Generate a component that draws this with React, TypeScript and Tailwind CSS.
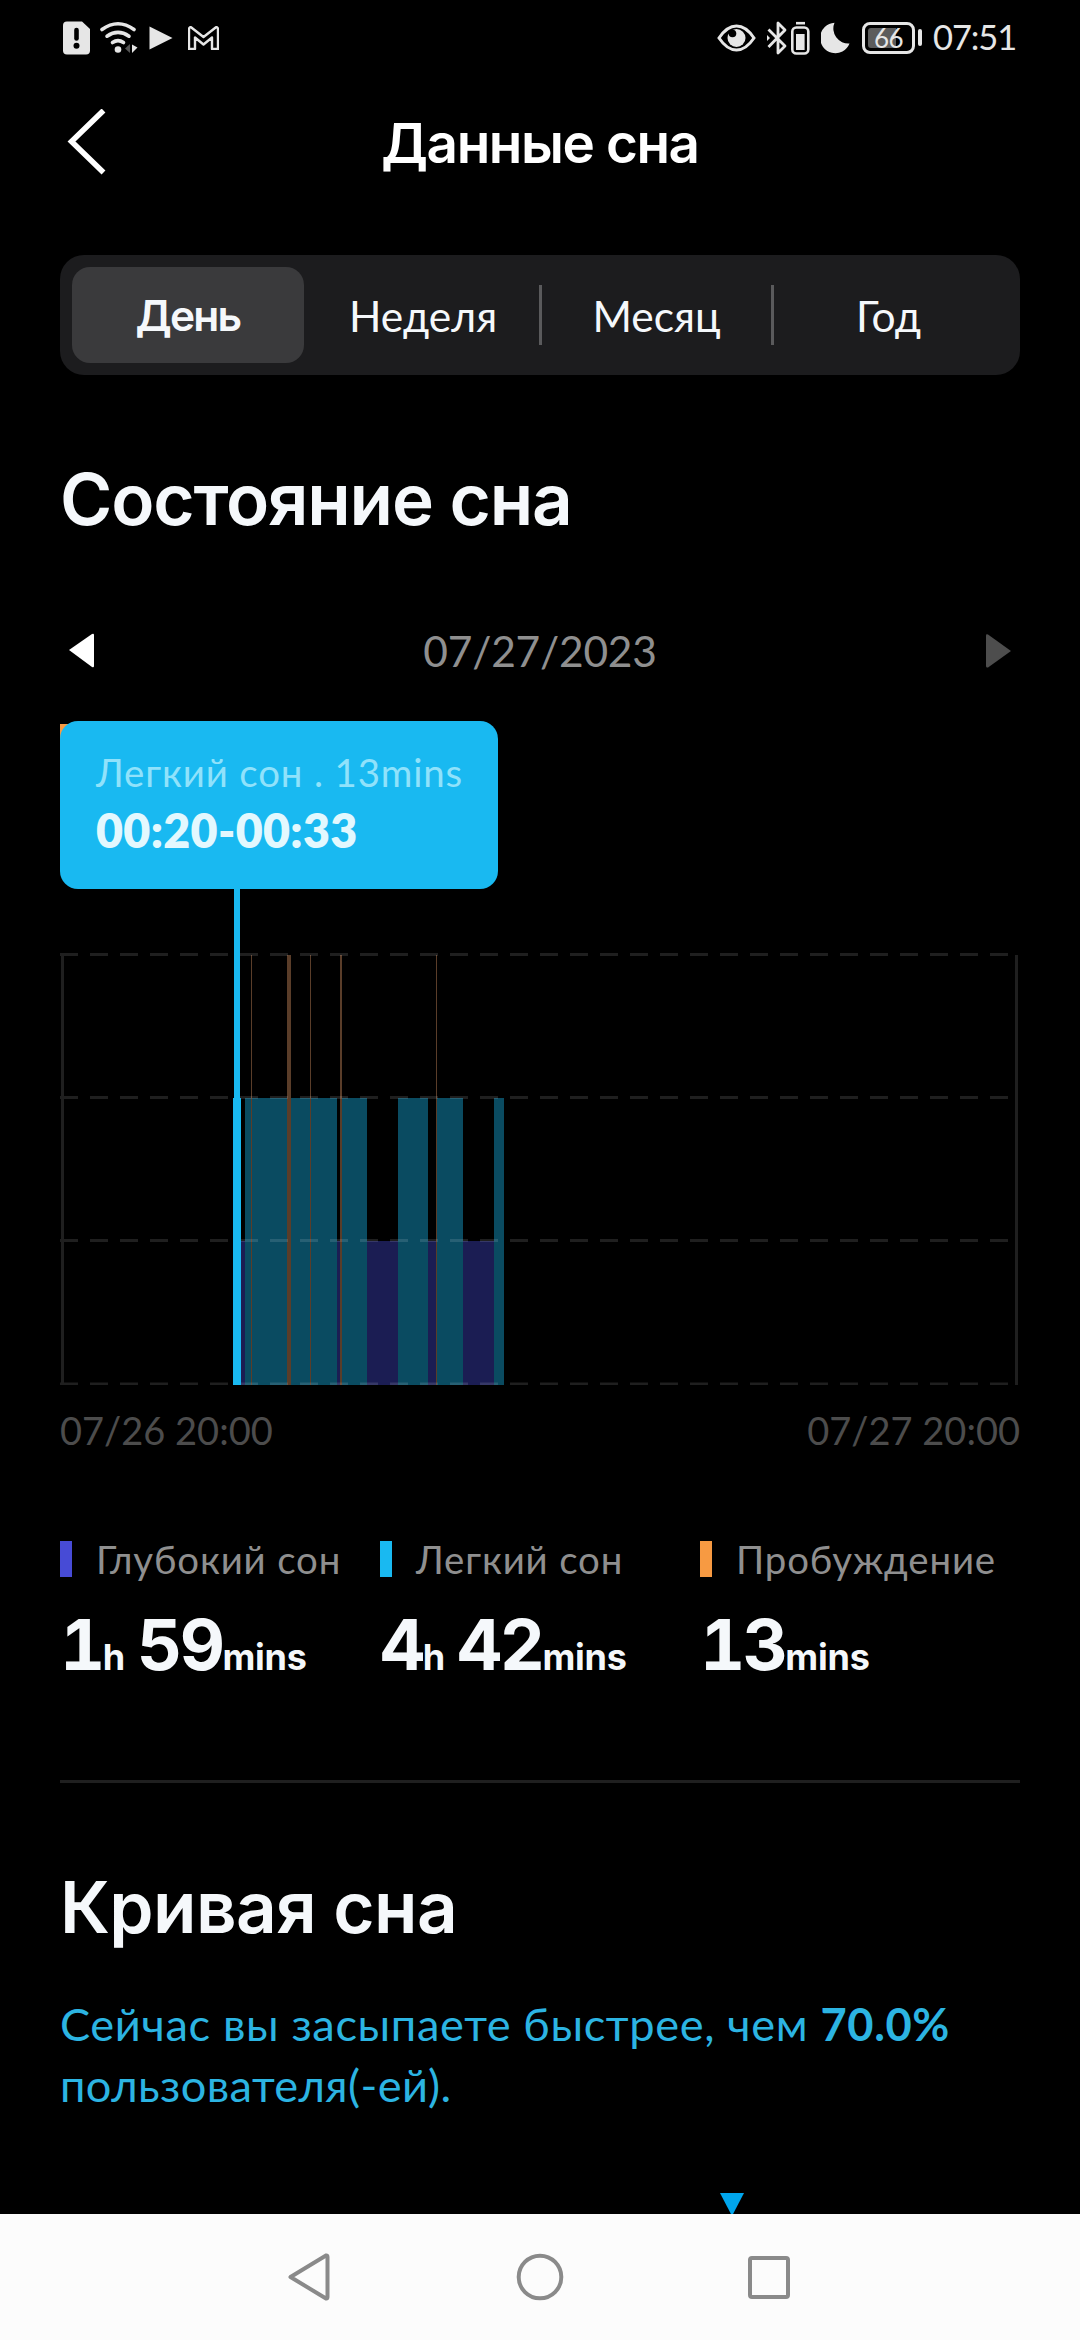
import { useState } from "react";
import clsx from "clsx";

const tabs = ["День", "Неделя", "Месяц", "Год"];

type Stage = "deep" | "light" | "awake";

// x / width inside the 960px wide chart
const segments: { stage: Stage; x: number; w: number }[] = [
  { stage: "deep", x: 181, w: 4 },
  { stage: "light", x: 185, w: 92 },
  { stage: "deep", x: 277, w: 4 },
  { stage: "light", x: 281, w: 26 },
  { stage: "deep", x: 307, w: 31 },
  { stage: "light", x: 338, w: 30 },
  { stage: "deep", x: 368, w: 8 },
  { stage: "light", x: 376, w: 27 },
  { stage: "deep", x: 403, w: 31 },
  { stage: "light", x: 434, w: 10 },
  { stage: "awake", x: 191, w: 1 },
  { stage: "awake", x: 227, w: 4 },
  { stage: "awake", x: 250, w: 1 },
  { stage: "awake", x: 280, w: 2 },
  { stage: "awake", x: 376, w: 1 },
];

const chartBottom = 664;
const stageTop = { awake: 234, light: 377, deep: 520 };
const stageColor = { awake: "#5a3d29", light: "#0a4b61", deep: "#1b1d53" };
const gridLines = [233.5, 376.5, 519.5, 663];

const legend = [
  { label: "Глубокий сон", color: "bg-[#474bd6]", hours: "1", mins: "59" },
  { label: "Легкий сон", color: "bg-[#19b9f1]", hours: "4", mins: "42" },
  { label: "Пробуждение", color: "bg-[#f79a42]", hours: "", mins: "13" },
];

function StatusBar() {
  return (
    <div className="flex h-[75px] items-center pl-[63px] pr-[66px] text-[#e6e6e6]">
      <svg className="h-[34px] w-[27px]" viewBox="0 0 27 34">
        <path d="M4 0.5H19L27 8V29.500Q27 33.500 23 33.500H4Q0 33.500 0 29.500V4.500Q0 0.500 4 0.500Z" fill="currentColor" />
        <path d="M13.500 9V17.500" stroke="#000" strokeWidth="4.600" strokeLinecap="round" />
        <circle cx="13.500" cy="24.800" r="3" fill="#000" />
      </svg>
      <svg className="ml-[10px] h-[34px] w-[38px]" viewBox="0 0 38 34">
        <g fill="none" stroke="currentColor" strokeWidth="3.600" strokeLinecap="round">
          <path d="M2 8.500Q18 -3 34 8.500" />
          <path d="M7 15.200Q18 7.500 29 15.200" />
          <path d="M12.500 21.500Q18 17.800 23.500 21.500" />
        </g>
        <circle cx="18" cy="28.500" r="3.300" fill="currentColor" />
        <path d="M25 27.500L30 23V32Z" fill="#555" />
        <path d="M32 23.500V32L37.500 26.500Z" fill="currentColor" />
      </svg>
      <svg className="ml-[11px] h-[24px] w-[24px]" viewBox="0 0 24 24">
        <path d="M0.500 0.500L23.500 12L0.500 23.500Z" fill="currentColor" />
      </svg>
      <svg className="ml-[15px] h-[24px] w-[31px]" viewBox="0 0 31 24">
        <path
          d="M1 3.500Q1 1 3 1.200L15.500 11L28 1.200Q30 1 30 3.500V23H24V11.500L15.500 18.500L7 11.500V23H1Z"
          fill="none"
          stroke="currentColor"
          strokeWidth="2.400"
          strokeLinejoin="round"
        />
      </svg>

      <svg className="ml-auto h-[28px] w-[39px]" viewBox="0 0 39 28">
        <path d="M2 14Q10 2 19.500 2Q29 2 37 14Q29 26 19.500 26Q10 26 2 14Z" fill="none" stroke="currentColor" strokeWidth="3" />
        <circle cx="19.500" cy="14" r="9" fill="currentColor" />
        <circle cx="15.500" cy="9.500" r="3.800" fill="#000" />
      </svg>
      <svg className="ml-[11px] h-[34px] w-[20px]" viewBox="0 0 20 34">
        <path d="M1.500 26L18 9L11 2V32L18 25L1.500 8.500" fill="none" stroke="currentColor" strokeWidth="2.800" strokeLinejoin="round" />
        <path d="M0 14V20L3 17Z" fill="currentColor" />
      </svg>
      <svg className="ml-[4px] h-[34px] w-[19px]" viewBox="0 0 19 34">
        <path d="M5 2.200H14" stroke="currentColor" strokeWidth="2.600" />
        <rect x="1.300" y="6.500" width="16" height="26" rx="4" fill="none" stroke="currentColor" strokeWidth="2.600" />
        <rect x="5" y="13" width="8.600" height="16" fill="currentColor" />
      </svg>
      <svg className="ml-[11px] h-[32px] w-[29px]" viewBox="0 0 29 32">
        <path d="M13.500 0.800A15.200 15.200 0 1 0 28.500 21.500A15 15 0 0 1 13.500 0.800Z" fill="currentColor" />
      </svg>
      <div className="ml-[12px] flex h-[32px] w-[53px] items-center rounded-[8px] border-[3px] border-[#e6e6e6] bg-black p-[3px]">
        <div className="flex h-[20px] w-[28px] items-center rounded-l-[3px] bg-[#5c5c5c] pl-[6px] text-[26px] leading-none tracking-[-0.5px]">66</div>
      </div>
      <div className="ml-[3px] h-[17px] w-[4px] rounded-[2px] bg-[#e6e6e6]" />
      <span className="ml-[11px] w-[81px] text-[34.5px] leading-none tracking-[-1.1px] whitespace-nowrap">07:51</span>
    </div>
  );
}

function SleepChart() {
  return (
    <div className="relative mt-[40px] h-[664px]">
      <svg className="block h-[664px] w-[960px]" viewBox="0 0 960 664">
        <rect x="0" y="3" width="12" height="36" fill="#f79a42" />
        {segments.map((s, i) => (
          <rect
            key={i}
            x={s.x}
            y={stageTop[s.stage]}
            width={s.w}
            height={chartBottom - stageTop[s.stage]}
            fill={stageColor[s.stage]}
          />
        ))}
        {gridLines.map((y) => (
          <path key={y} d={`M0 ${y}H960`} stroke="#fff" strokeOpacity="0.12" strokeWidth="3" strokeDasharray="18 12" />
        ))}
        <path d="M2.500 234V664M956.500 234V664" stroke="#1f1f1f" strokeWidth="3" />
        <rect x="174" y="160" width="6" height="504" fill="#19b9f1" />
        <rect x="173" y="377" width="8" height="287" fill="#19b9f1" />
      </svg>
      <div className="absolute left-0 top-0 flex h-[168px] w-[438px] flex-col rounded-[18px] bg-[#19b9f1] pl-[36px] pt-[27px] whitespace-nowrap">
        <p className="text-[38.4px] leading-[48px] tracking-[0.86px] text-[#90e2fb]">Легкий сон . 13mins</p>
        <p className="mt-[6px] text-[46.6px] font-extrabold leading-[56px] tracking-[0.3px] text-[#e3f8fe]">00:20-00:33</p>
      </div>
    </div>
  );
}

export default function App() {
  const [activeTab, setActiveTab] = useState(0);

  return (
    <div className="flex h-[2340px] w-[1080px] flex-col overflow-hidden bg-black font-['Lato','Noto_Sans',sans-serif] text-[#f5f8fb]">
      <StatusBar />

      <header className="grid h-[136px] grid-cols-[120px_1fr_120px] items-center">
        <button className="pl-[67px]">
          <svg className="h-[68px] w-[40px]" viewBox="0 0 40 68">
            <path d="M36.500 1.500L4.500 32.500L36.500 63.500" fill="none" stroke="#fff" strokeWidth="5.500" />
          </svg>
        </button>
        <h1 className="pt-[1px] text-center font-['Inter'] text-[54.8px] font-semibold leading-none tracking-[-1.4px] text-white">Данные сна</h1>
      </header>

      <main className="flex flex-1 flex-col px-[60px]">
        <div className="mt-[44px] flex h-[120px] items-center rounded-[24px] bg-[#1c1c1e] px-[12px]">
          {tabs.map((tab, i) => (
            <div key={tab} className="flex items-center">
              {i > 0 && <div className={clsx("h-[60px] w-[3px]", i > 1 && "bg-[#5a5a5c]")} />}
              <button
                onClick={() => setActiveTab(i)}
                className={clsx(
                  "h-[96px] rounded-[18px] pt-[2px] text-[42.5px] leading-none",
                  i < 2 ? "w-[232px]" : "w-[229px]",
                  activeTab === i && "bg-[#3a3a3c] font-['Inter'] font-semibold tracking-[-1.8px]"
                )}
              >
                {tab}
              </button>
            </div>
          ))}
        </div>

        <h2 className="mt-[84px] font-['Inter'] text-[71px] font-semibold leading-[80px] tracking-[-1.15px]">Состояние сна</h2>

        <div className="mt-[82px] flex h-[60px] items-center justify-between px-[9px]">
          <svg className="h-[36px] w-[26px]" viewBox="0 0 26 36">
            <path d="M0 17L23 1Q25 0 25 2V33Q25 35 23 34Z" fill="#fff" />
          </svg>
          <span className="text-[42.5px] leading-none tracking-[-0.23px] text-[#8f8f8f]">07/27/2023</span>
          <svg className="h-[36px] w-[26px]" viewBox="0 0 26 36">
            <path d="M26 18L3 1.500Q1 0.500 1 2.500V33Q1 35 3 34.500Z" fill="#4d4d4d" />
          </svg>
        </div>

        <SleepChart />

        <div className="mt-[25px] flex justify-between text-[38px] leading-[40px] text-[#4c4c4c]">
          <span>07/26 20:00</span>
          <span>07/27 20:00</span>
        </div>

        <div className="mt-[91px] grid grid-cols-3">
          {legend.map((item) => (
            <div key={item.label}>
              <div className="flex h-[36px] items-center gap-[24px]">
                <div className={clsx("h-[36px] w-[12px]", item.color)} />
                <span className="whitespace-nowrap text-[38.4px] leading-none tracking-[0.85px] text-[#8f8f8f]">{item.label}</span>
              </div>
              <p className="mt-[33px] flex h-[70px] items-baseline whitespace-nowrap font-['Inter'] text-[70px] font-bold leading-[70px] tabular-nums tracking-[-2.6px]">
                {item.hours && (
                  <>
                    <span>{item.hours}</span>
                    <span className="mr-[12px] text-[36px] tracking-normal">h</span>
                  </>
                )}
                <span>{item.mins}</span>
                <span className="text-[36px] tracking-[-0.2px]">mins</span>
              </p>
            </div>
          ))}
        </div>

        <div className="mt-[100px] h-[3px] bg-[#1f1f1f]" />

        <h2 className="mt-[84px] font-['Inter'] text-[71px] font-semibold leading-[80px] tracking-[-0.6px]">Кривая сна</h2>
        <p className="mt-[46px] text-[45.2px] leading-[61px] tracking-[0.63px] text-[#2cb4e2]">
          Сейчас вы засыпаете быстрее, чем <b className="font-bold">70.0%</b>
          <br />
          <span className="tracking-[0.4px]">пользователя(-ей).</span>
        </p>

        <div className="mt-auto h-[21px] pl-[660px]">
          <svg className="h-[21px] w-[24px]" viewBox="0 0 24 21">
            <path d="M0 0H24L12 23Z" fill="#00a6ed" />
          </svg>
        </div>
      </main>

      <nav className="flex h-[126px] items-center bg-[#fcfcfc] pl-[287px] text-[#8a8a8a]">
        <svg className="h-[48px] w-[43px]" viewBox="0 0 43 48">
          <path d="M3.500 24L39 2.500Q40.500 2 40.500 4V44Q40.500 46 39 45.500Z" fill="none" stroke="currentColor" strokeWidth="4" strokeLinejoin="round" />
        </svg>
        <svg className="ml-[186px] h-[48px] w-[48px]" viewBox="0 0 48 48">
          <circle cx="24" cy="24" r="21.300" fill="none" stroke="currentColor" strokeWidth="4" />
        </svg>
        <svg className="ml-[183px] h-[44px] w-[44px]" viewBox="0 0 44 44">
          <rect x="3" y="3" width="38" height="39" rx="2" fill="none" stroke="currentColor" strokeWidth="4" />
        </svg>
      </nav>
    </div>
  );
}
